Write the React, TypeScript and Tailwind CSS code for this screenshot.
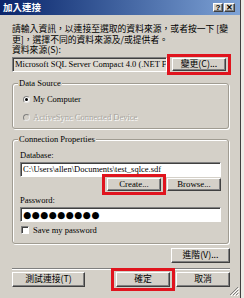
import React from 'react';

const cjk = "font-['Noto_Sans_CJK_TC',sans-serif]";
const serif = "font-['Liberation_Serif',serif]";

const raised =
  'flex items-center justify-center bg-[#d4d0c8] border border-t-white border-l-white border-r-[#404040] border-b-[#404040] shadow-[inset_-1px_-1px_0_#808080]';
const sunken =
  'border border-t-[#808080] border-l-[#808080] border-r-white border-b-white shadow-[inset_1px_1px_0_#404040]';

const Button: React.FC<{ label: string; w: string; h?: string; font?: string; highlight?: boolean }> = ({
  label,
  w,
  h = 'h-[15px]',
  font = cjk,
  highlight,
}) => (
  <div className={`relative ${w} ${h}`}>
    <div className={`${raised} w-full h-full text-[8.8px] leading-none text-black ${font}`}>{label}</div>
    {highlight && (
      <div className="absolute -inset-x-[5px] -inset-y-[4px] border-[3px] border-[#e0141e] pointer-events-none" />
    )}
  </div>
);

const Group: React.FC<{ title: string; className: string; children: React.ReactNode }> = ({
  title,
  className,
  children,
}) => (
  <div
    className={`relative mr-px rounded-[3px] border border-[#a09c92] shadow-[1px_1px_0_#fff,inset_1px_1px_0_#fff] ${className}`}
  >
    <span
      className={`absolute -top-[6px] left-[5px] px-px bg-[#d4d0c8] text-[8.5px] leading-[11px] text-black ${serif}`}
    >
      {title}
    </span>
    {children}
  </div>
);

const Radio: React.FC<{ checked?: boolean; disabled?: boolean; label: string }> = ({ checked, disabled, label }) => (
  <div className="flex items-center h-[10px]">
    <div
      className={`w-[7px] h-[7px] rounded-full flex items-center justify-center ${
        disabled ? 'bg-[#d4d0c8]' : 'bg-white'
      } border border-t-[#808080] border-l-[#808080] border-r-[#e8e8e8] border-b-[#e8e8e8]`}
    >
      {checked && <div className="w-[3px] h-[3px] rounded-full bg-black" />}
    </div>
    <span
      className={`ml-[3px] text-[8.5px] leading-none ${serif} ${
        disabled ? 'text-[#a8a6a0] [text-shadow:1px_1px_0_#fff]' : 'text-black'
      }`}
    >
      {label}
    </span>
  </div>
);

export default function App() {
  return (
    <div className="w-[244px] h-[298px] overflow-hidden flex bg-[#d4d0c8]">
      <div className="relative w-[241px] h-full flex flex-col border-r border-[#404040]">
        {/* title bar */}
        <div className="h-[15px] flex items-center pl-[3px] pr-[5px] bg-gradient-to-r from-[#0a246a] to-[#7fa3d6]">
          <span className={`text-[9.5px] font-bold text-white leading-none ${cjk}`}>加入連接</span>
          <div className="ml-auto flex gap-px">
            <div className={`${raised} w-[10px] h-[9px] text-[8px] font-bold font-['Liberation_Sans',sans-serif]`}>?</div>
            <div className={`${raised} w-[11px] h-[9px] text-[8px] font-bold font-['Liberation_Sans',sans-serif]`}>✕</div>
          </div>
        </div>

        <div className="flex flex-col pl-[12px] pr-[10px]">
          <p className={`mt-[9px] text-[8.8px] leading-[10.5px] text-black whitespace-nowrap ${cjk}`}>
            請輸入資訊，以連接至選取的資料來源，或者按一下 [變
            <br />
            更]，選擇不同的資料來源及/或提供者。
          </p>
          <div className={`text-[8.8px] leading-[10px] text-black ${cjk}`}>資料來源(S):</div>

          <div className="mt-[2px] flex items-center justify-between h-[15px] pr-[4px]">
            <div className={`${sunken} w-[155px] h-[15px] bg-[#dedad2] flex items-center pl-[2px] overflow-hidden`}>
              <span className={`text-[8.5px] leading-none whitespace-nowrap text-black ${serif}`}>
                Microsoft SQL Server Compact 4.0 (.NET Fr
              </span>
            </div>
            <Button label="變更(C)..." w="w-[54px]" h="h-[13px]" highlight />
          </div>

          <Group title="Data Source" className="mt-[11px] h-[46px] pl-[10px] pt-[10px] flex flex-col gap-[8px]">
            <Radio checked label="My Computer" />
            <Radio disabled label="ActiveSync Connected Device" />
          </Group>

          <Group title="Connection Properties" className="mt-[10px] h-[105px] pl-[7px] pr-[7px] pt-[10px] flex flex-col">
            <div className={`text-[8.5px] leading-[10px] text-black ${serif}`}>Database:</div>
            <div className={`${sunken} mt-[2px] h-[15px] bg-white flex items-center pl-[2px] overflow-hidden`}>
              <span className={`text-[8.5px] leading-none whitespace-nowrap text-black ${serif}`}>
                C:\Users\allen\Documents\test_sqlce.sdf
              </span>
            </div>
            <div className="mt-[1px] flex justify-end gap-[6px]">
              <Button label="Create..." w="w-[54px]" h="h-[13px]" font={serif} highlight />
              <Button label="Browse..." w="w-[54px]" h="h-[13px]" font={serif} />
            </div>
            <div className={`mt-[4px] text-[8.5px] leading-[10px] text-black ${serif}`}>Password:</div>
            <div className={`${sunken} mt-[2px] h-[15px] bg-white flex items-center pl-[2px] overflow-hidden`}>
              <span className="text-[9.2px] leading-none tracking-[0.5px] text-black font-['DejaVu_Sans',sans-serif]">
                ●●●●●●●●●
              </span>
            </div>
            <div className="mt-[3px] flex items-center h-[10px] pl-px">
              <div className={`${sunken} w-[8px] h-[8px] bg-white`} />
              <span className={`ml-[4px] text-[8.5px] leading-none text-black ${serif}`}>Save my password</span>
            </div>
          </Group>

          <div className="mt-[4px] flex justify-end">
            <Button label="進階(V)..." w="w-[59px]" />
          </div>

          <div className="mt-[5px] h-[2px] border-t border-[#808080] border-b border-b-white" />

          <div className="mt-[2px] flex items-center">
            <Button label="測試連接(T)" w="w-[74px]" />
            <div className="ml-[31px]">
              <Button label="確定" w="w-[54px]" highlight />
            </div>
            <div className="ml-[6px]">
              <Button label="取消" w="w-[54px]" />
            </div>
          </div>
        </div>

        {/* size grip */}
        <svg className="absolute right-[1px] bottom-[2px]" width="10" height="10" viewBox="0 0 10 10">
          <path d="M9 1 L1 9 M9 4 L4 9 M9 7 L7 9" stroke="#808080" strokeWidth="1" />
          <path d="M10 2 L2 10 M10 5 L5 10 M10 8 L8 10" stroke="#ffffff" strokeWidth="1" />
        </svg>
      </div>
      <div className="flex-1 bg-[#ecebe6]" />
    </div>
  );
}
